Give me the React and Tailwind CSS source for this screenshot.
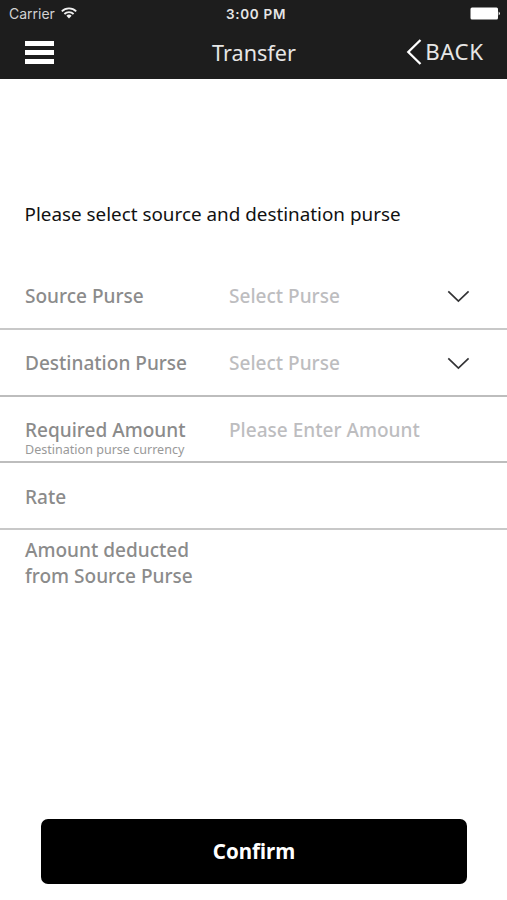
function Chevron() {
  return (
    <svg className="ml-auto mr-[37px]" width="23" height="13" viewBox="0 0 23 13" fill="none" stroke="#333335" strokeWidth="1.7">
      <path d="M1.3 1.3 11.4 11 21.6 1.3" />
    </svg>
  );
}

function Row({ label, value, select, note, line }) {
  return (
    <div className={`flex h-[66.8px] items-center border-b-2 pt-[2px] pl-[25px] text-[19.05px] leading-[24px] font-medium ${line}`}>
      <div className={`flex w-[204px] shrink-0 flex-col text-[#8b8b8b] ${note ? "pt-[15px]" : ""}`}>
        <span className="whitespace-nowrap">{label}</span>
        {note && (
          <span className="text-[12.55px] leading-[15px] font-normal whitespace-nowrap text-[#999]">{note}</span>
        )}
      </div>
      {value && <span className="whitespace-nowrap text-[#bdbdbf]">{value}</span>}
      {select && <Chevron />}
    </div>
  );
}

export default function App() {
  return (
    <div className="flex h-[900px] w-[507px] flex-col overflow-hidden bg-white font-['Noto_Sans',sans-serif]">
      <header className="h-[79px] shrink-0 bg-[#1d1d1d] text-[#e6e6e6]">
        <div className="grid h-[27px] grid-cols-3 items-center pr-[6px] pl-[9px] font-['Inter',sans-serif] text-[14px] leading-[18px]">
          <div className="flex items-center gap-[6px]">
            <span className="text-[#d2d2d2]">Carrier</span>
            <svg className="-mt-px" width="16" height="12" viewBox="0 0 16 12" fill="none" stroke="#f1f1f1" strokeWidth="1.8">
              <path d="M.8 4.3a10.2 10.2 0 0 1 14.4 0M3.4 7a6.5 6.5 0 0 1 9.2 0" />
              <path d="M5.4 8.8a3.7 3.7 0 0 1 5.2 0L8 11.5Z" fill="#f1f1f1" stroke="none" />
            </svg>
          </div>
          <span className="pl-[2px] text-center text-[13.5px] font-semibold tracking-[0.7px] whitespace-nowrap">3:00 PM</span>
          <svg className="ml-auto" width="31" height="13" viewBox="0 0 31 13" fill="#fff">
            <rect x="0.5" y="0.5" width="27.5" height="12" rx="1.5" />
            <path d="M28.7 4.6q2.4 1.9 0 3.8Z" />
          </svg>
        </div>
        <div className="grid h-[50px] grid-cols-3 items-center pr-[24px] pl-[25px]">
          <div className="flex w-[29px] flex-col gap-[4px]">
            <span className="h-[5px] bg-white" />
            <span className="h-[5px] bg-white" />
            <span className="h-[5px] bg-white" />
          </div>
          <h1 className="pt-px text-center text-[21.6px] leading-[28px]">Transfer</h1>
          <button className="flex items-center justify-end gap-[3px] pb-px text-[22.3px] leading-[28px] tracking-[0.5px]">
            <svg width="16" height="26" viewBox="0 0 16 26" fill="none" stroke="#fff" strokeWidth="2.3">
              <path d="M14.5 1 2.3 13 14.5 25" />
            </svg>
            <span className="-mr-[0.5px]">BACK</span>
          </button>
        </div>
      </header>
      <main className="flex flex-1 flex-col">
        <p className="mt-[122px] pl-[24.5px] text-[18.85px] leading-[26px] whitespace-nowrap text-[#111]">
          Please select source and destination purse
        </p>
        <section className="mt-[36px]">
          <Row label="Source Purse" value="Select Purse" select line="border-[#c8c8c8]" />
          <Row label="Destination Purse" value="Select Purse" select line="border-[#bdbdbd]" />
          <Row label="Required Amount" value="Please Enter Amount" note="Destination purse currency" line="border-[#bdbdbd]" />
          <Row label="Rate" line="border-[#c8c8c8]" />
          <p className="mt-[7px] pl-[25px] text-[19.05px] leading-[26px] font-medium text-[#8b8b8b]">
            Amount deducted
            <br />
            from Source Purse
          </p>
        </section>
        <button className="mt-auto mr-[40px] mb-[16px] ml-[41px] h-[65px] rounded-[7px] bg-black text-[20.5px] font-bold text-white">
          Confirm
        </button>
      </main>
    </div>
  );
}
